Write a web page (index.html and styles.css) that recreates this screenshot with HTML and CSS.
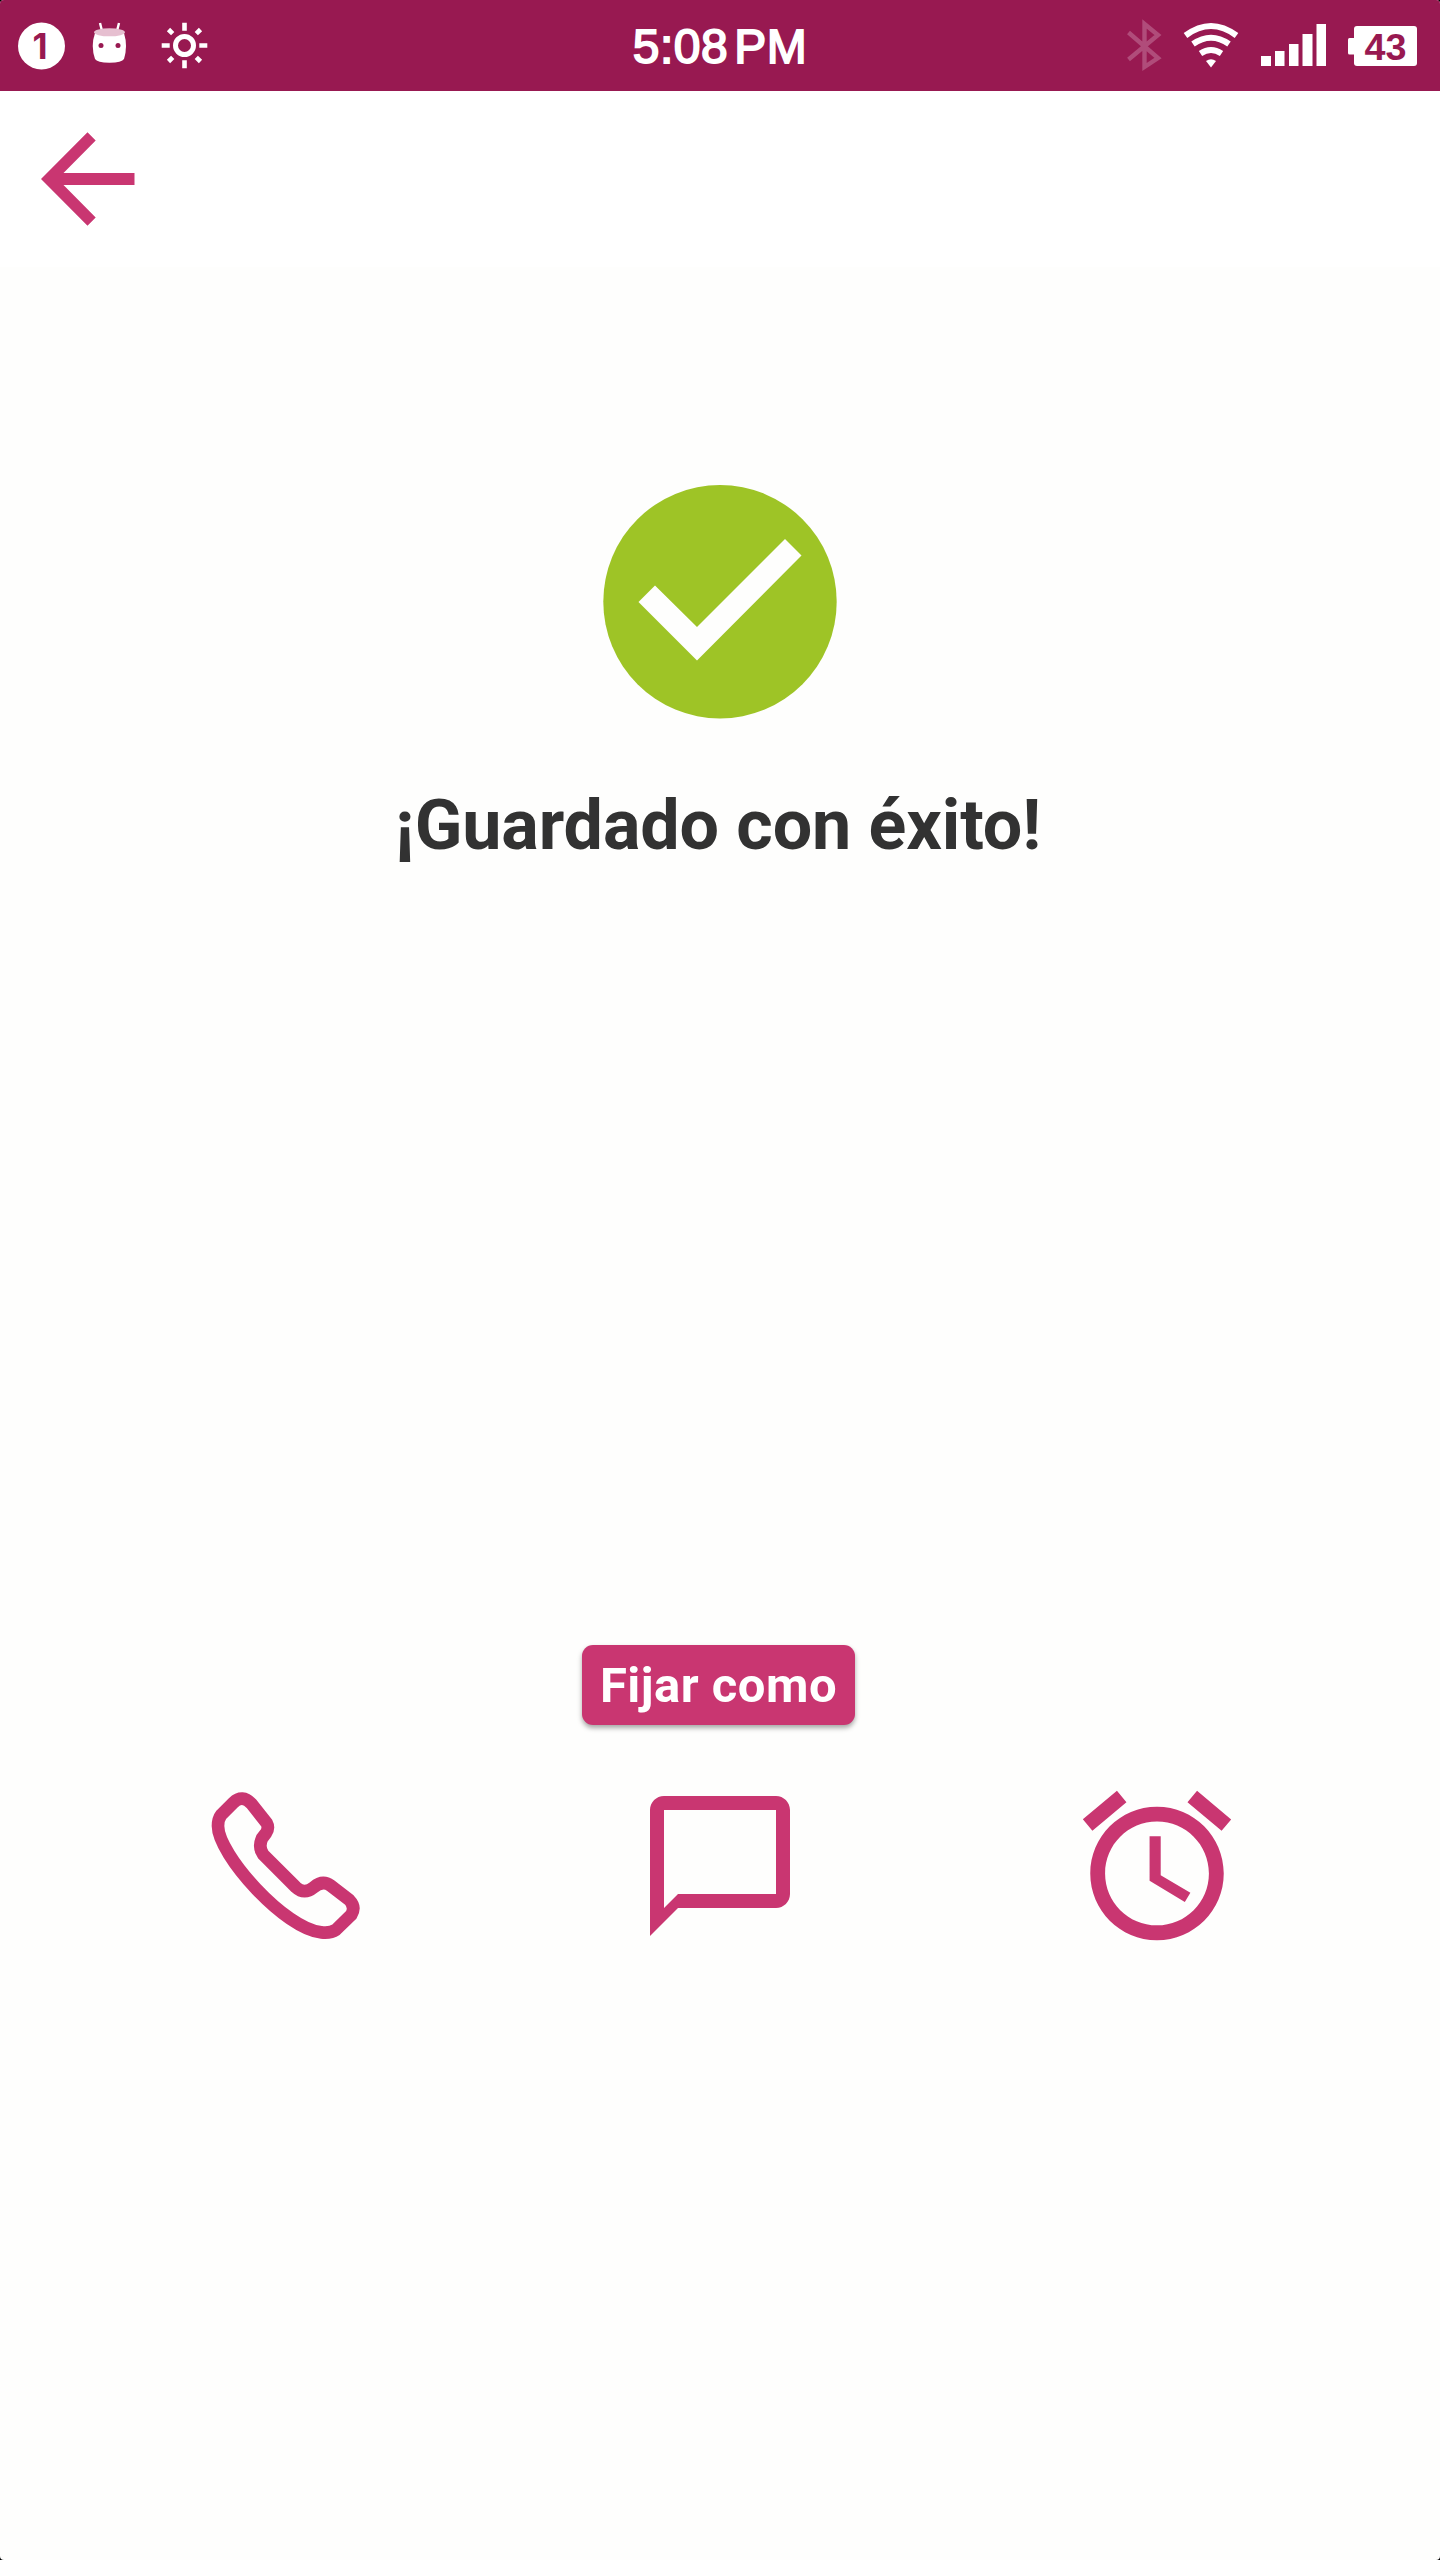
FILE: index.html
```html
<!DOCTYPE html>
<html lang="es">
<head>
<meta charset="utf-8">
<title>Guardado con éxito</title>
<link rel="stylesheet" href="styles.css">
</head>
<body>
<div class="screen">
  <header class="status-bar">
    <div class="status-left">
      <svg width="48" height="91" viewBox="18 0 48 91"><circle cx="41.5" cy="46" r="23.5" fill="#fff"/><text class="badge-text" x="32.500" y="59">1</text></svg>
      <svg width="36" height="91" viewBox="92 0 36 91">
        <path d="M100 23L102 31M119 23L117 31" stroke="#fff" stroke-width="2.4"/>
        <path d="M95 33Q109.500 25 124 33Q128 46 124 59Q122 62.700 109.500 62.700Q97 62.700 95 59Q90.500 46 95 33Z" fill="#fff"/>
        <ellipse cx="109.500" cy="32.300" rx="15.500" ry="4" fill="#e6bfd0"/>
        <circle class="ink" cx="101" cy="45.500" r="2.500"/><circle class="ink" cx="118" cy="45.500" r="2.500"/>
      </svg>
      <svg width="48" height="91" viewBox="161 0 48 91" fill="none" stroke="#fff">
        <circle cx="184.500" cy="45.500" r="9" stroke-width="5"/>
        <path d="M184.500 22.700V30.700M184.500 60.300V68.300M161.700 45.500H169.700M199.300 45.500H207.300M168.500 29.500L172.700 33.700M196.300 57.300L200.500 61.500M168.500 61.500L172.700 57.300M196.300 33.700L200.500 29.500" stroke-width="4.600"/>
      </svg>
    </div>
    <div class="clock">5:08<span class="meridiem">PM</span></div>
    <div class="status-right">
      <svg width="36" height="91" viewBox="1126 0 36 91"><path d="M1128.500 32.500L1158 58L1144.500 67V24L1158 35L1128.500 59.500" fill="none" stroke="#b04c7a" stroke-width="4.400"/></svg>
      <svg width="56" height="91" viewBox="1183 0 56 91" fill="none" stroke="#fff">
        <path d="M1185.500 35.500Q1211 16.500 1236.500 35.500M1193 44Q1211 31.500 1229 44M1200.500 53.500Q1211 46.500 1221.500 53.500" stroke-width="6"/>
        <path d="M1206 61Q1211 57.500 1216 61L1211 67.500Z" fill="#fff" stroke="none"/>
      </svg>
      <svg width="66" height="91" viewBox="1261 0 66 91" fill="#fff"><path d="M1261 56h10v10h-10zM1275 51h9.500v15h-9.500zM1289 44h9.500v22h-9.500zM1302.500 34h10v32h-10zM1316.500 24h9.500v42h-9.500z"/></svg>
      <svg width="70" height="91" viewBox="1348 0 70 91"><rect x="1354" y="26" width="63" height="40" rx="3" fill="#fff"/><rect x="1348" y="38" width="9" height="16.500" rx="1.500" fill="#fff"/><text class="battery-text" x="1364.500" y="59.500" textLength="42" lengthAdjust="spacingAndGlyphs">43</text></svg>
    </div>
  </header>
  <nav class="toolbar">
    <svg width="94" height="94" viewBox="41.500 132 94 94"><path class="accent" d="M41.500 179L88 132.300L96.200 140.500L64 173H135V185H64L96.200 217.500L88 225.700Z"/></svg>
  </nav>
  <main class="content">
    <svg class="check" width="234" height="234" viewBox="603 485 234 234"><circle cx="720" cy="601.700" r="116.700" fill="#9ec426"/><path d="M638.500 602L655 585.500L697 627L785 539L801.500 555.500L697 660.500Z" fill="#fefefd"/></svg>
    <h1 class="title">¡Guardado con éxito!</h1>
    <button class="pin-button" type="button">Fijar como</button>
    <div class="actions">
      <svg width="190" height="190" viewBox="0 0 570 570"><path d="M94 134L130 98Q157 72 184 101L230 159Q238 174 228 189L216 205Q204 232 220 254L318 352Q343 375 371 352Q398 329 422 347L478 390Q498 411 484 434L438 479Q422 490 394 487C286 478 84 254 84 168Q84 147 94 134Z" fill="none" stroke="#c93671" stroke-width="38"/></svg>
      <svg width="168" height="168" viewBox="0 0 24 24"><path class="accent" d="M20 2H4c-1.100 0-2 .9-2 2v18l4-4h14c1.100 0 2-.9 2-2V4c0-1.100-.9-2-2-2zm0 14H6l-2 2V4h16v12z"/></svg>
      <svg width="178" height="178" viewBox="0 0 24 24"><path class="accent" d="M22 5.720l-4.600-3.860-1.290 1.530 4.600 3.860L22 5.720zM7.880 3.390L6.600 1.860 2 5.710l1.290 1.530 4.590-3.850zM12.500 8H11v6l4.750 2.850.75-1.230-4-2.370V8zM12 4c-4.970 0-9 4.030-9 9s4.020 9 9 9c4.970 0 9-4.030 9-9s-4.030-9-9-9zm0 16c-3.870 0-7-3.130-7-7s3.130-7 7-7 7 3.130 7 7-3.130 7-7 7z"/></svg>
    </div>
  </main>
</div>
</body>
</html>
```
FILE: styles.css
```css
* { box-sizing: border-box; }
body { margin: 0; background: #000; font-family: Roboto, sans-serif; }
svg { display: block; flex: none; }
.screen { width: 1440px; height: 2560px; display: flex; flex-direction: column; background: #fefefd; border-radius: 4px; overflow: hidden; }
.status-bar { height: 91px; display: grid; grid-template-columns: 1fr auto 1fr; background: #981951; flex: none; }
.status-left { display: flex; padding-left: 18px; }
.status-left svg:nth-child(2) { margin-left: 26px; }
.status-left svg:nth-child(3) { margin-left: 33px; }
.status-right { display: flex; justify-content: flex-end; padding-right: 22px; }
.status-right svg:nth-child(2) { margin-left: 21px; }
.status-right svg:nth-child(3) { margin-left: 22px; }
.status-right svg:nth-child(4) { margin-left: 21px; }
.clock { font: 48px/93px "Liberation Sans", sans-serif; letter-spacing: .5px; color: #fff; -webkit-text-stroke: 1.8px #fff; white-space: nowrap; }
.meridiem { margin-left: 6px; }
.badge-text { font: bold 35px Inter, sans-serif; fill: #981951; }
.battery-text { font: bold 36px "Liberation Sans", sans-serif; fill: #981951; }
.ink { fill: #981951; }
.accent { fill: #c93671; }
.toolbar { height: 176px; padding-left: 41px; display: flex; align-items: center; background: #fff; flex: none; }
.content { display: flex; flex-direction: column; align-items: center; }
.check { margin-top: 218px; }
.title { margin: 64px 4px 0 0; font-size: 70px; line-height: 84px; letter-spacing: -.1px; font-weight: 700; color: #323232; white-space: nowrap; }
.pin-button { margin: 777.5px 0 0 -3px; width: 273px; height: 80px; padding: 0; border: 0; border-radius: 11px; background: #c93671; color: #fff; font: 700 49px/81px Roboto, sans-serif; letter-spacing: .5px; box-shadow: 0 3px 5px rgba(0, 0, 0, .35); }
.actions { width: 1308px; margin-top: 45px; display: grid; grid-template-columns: repeat(3, 1fr); justify-items: center; }
.actions svg:nth-child(1) { margin-left: 2px; }
.actions svg:nth-child(2) { margin-top: 12px; }
.actions svg:nth-child(3) { margin: 7px 0 0 2px; }
```
